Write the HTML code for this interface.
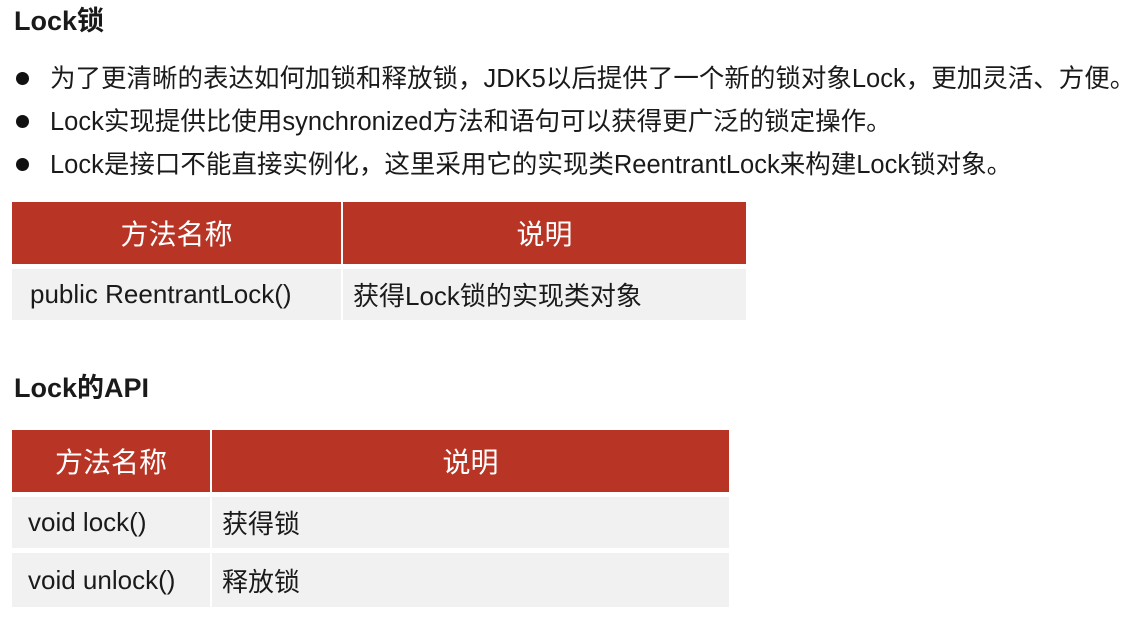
<!DOCTYPE html>
<html><head><meta charset="utf-8"><style>
body{margin:0;width:1140px;height:637px;background:#fff;position:relative;overflow:hidden;font-family:"Liberation Sans","Noto Sans CJK SC",sans-serif;color:#1a1a1a}
.a{position:absolute;white-space:nowrap;line-height:30px}
h1{position:absolute;margin:0;font-size:27px;font-weight:bold;left:14px;line-height:30px}
.b{font-size:25.5px;left:16px}
.b span{display:inline-block;width:13px;height:13px;border-radius:50%;background:#111;margin-right:21px;vertical-align:middle;position:relative;top:-2px}
.c{position:absolute;box-sizing:border-box;display:flex;align-items:center;white-space:nowrap}
.h{background:#b83526;color:#fff;font-size:28px;justify-content:center}
.r{background:#f1f1f1;font-size:26px;padding-left:16px}
</style></head><body>
<h1 style="top:6px">Lock锁</h1>
<div class="a b" style="top:64px"><span></span>为了更清晰的表达如何加锁和释放锁，JDK5以后提供了一个新的锁对象Lock，更加灵活、方便。</div>
<div class="a b" style="top:107px"><span></span>Lock实现提供比使用synchronized方法和语句可以获得更广泛的锁定操作。</div>
<div class="a b" style="top:150px"><span></span>Lock是接口不能直接实例化，这里采用它的实现类ReentrantLock来构建Lock锁对象。</div>

<div class="c h" style="left:12px;top:202px;width:329px;height:62px">方法名称</div>
<div class="c h" style="left:343px;top:202px;width:403px;height:62px">说明</div>
<div class="c r" style="left:12px;top:269px;width:329px;height:51px;padding-left:18px">public ReentrantLock()</div>
<div class="c r" style="left:343px;top:269px;width:403px;height:51px;padding-left:10px">获得Lock锁的实现类对象</div>

<h1 style="top:373px">Lock的API</h1>

<div class="c h" style="left:12px;top:430px;width:198px;height:62px">方法名称</div>
<div class="c h" style="left:212px;top:430px;width:517px;height:62px">说明</div>
<div class="c r" style="left:12px;top:497px;width:198px;height:51px">void lock()</div>
<div class="c r" style="left:212px;top:497px;width:517px;height:51px;padding-left:10px">获得锁</div>
<div class="c r" style="left:12px;top:553px;width:198px;height:54px">void unlock()</div>
<div class="c r" style="left:212px;top:553px;width:517px;height:54px;padding-left:10px">释放锁</div>
</body></html>
